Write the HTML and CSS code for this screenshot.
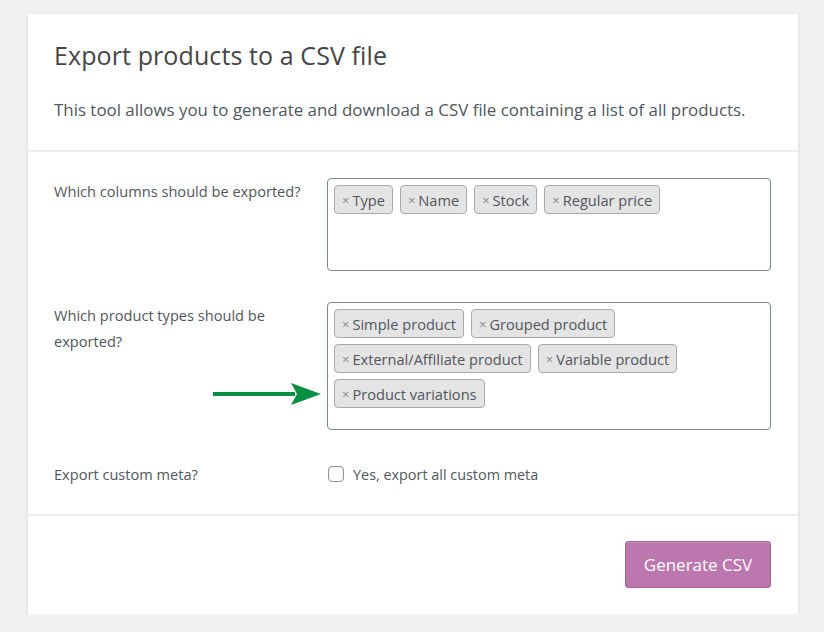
FILE: index.html
```html
<!DOCTYPE html>
<html>
<head>
<meta charset="utf-8">
<link rel="stylesheet" href="styles.css">
</head>
<body>
<div class="card">
  <header class="head">
    <h2 class="title">Export products to a CSV file</h2>
    <p class="desc">This tool allows you to generate and download a CSV file containing a list of all products.</p>
  </header>
  <section class="body">
    <div class="row">
      <div class="label">Which columns should be exported?</div>
      <div class="field">
        <div class="select cols">
          <span class="tag"><span class="x">×</span>Type</span>
          <span class="tag"><span class="x">×</span>Name</span>
          <span class="tag"><span class="x">×</span>Stock</span>
          <span class="tag"><span class="x">×</span>Regular price</span>
        </div>
      </div>
    </div>
    <div class="row">
      <div class="label">Which product types should be exported?</div>
      <div class="field">
        <div class="select types">
          <span class="tag"><span class="x">×</span>Simple product</span>
          <span class="tag"><span class="x">×</span>Grouped product</span>
          <span class="tag"><span class="x">×</span>External/Affiliate product</span>
          <span class="tag"><span class="x">×</span>Variable product</span>
          <span class="tag pointed"><span class="x">×</span>Product variations
            <svg class="arrow" width="110" height="24" viewBox="0 0 110 24"><rect x="0" y="10" width="82" height="4" fill="#0b8f43"/><polygon points="78,1 108,12 78,23 84,12" fill="#0b8f43"/></svg>
          </span>
        </div>
      </div>
    </div>
    <div class="row meta">
      <div class="label">Export custom meta?</div>
      <div class="field">
        <label class="check"><span class="box"></span>Yes, export all custom meta</label>
      </div>
    </div>
  </section>
  <footer class="foot">
    <button class="btn">Generate CSV</button>
  </footer>
</div>
</body>
</html>
```
FILE: styles.css
```css
html, body { margin: 0; padding: 0; }
body {
  background: #f1f1f1;
  font-family: "Open Sans", "Noto Sans", sans-serif;
  color: #50575e;
  padding: 14px 26px 0 28px;
}
.card {
  background: #fff;
  box-shadow: 0 1px 3px rgba(0,0,0,0.13);
  width: 770px;
}
.head {
  padding: 25px 26px 0 26px;
  border-bottom: 2px solid #eeeeee;
  box-sizing: border-box;
  height: 138px;
}
.title {
  margin: 0;
  font-size: 25px;
  font-weight: 400;
  color: #464646;
  line-height: 32px;
  letter-spacing: 0.1px;
}
.desc {
  margin: 27px 0 0 0;
  font-size: 16.9px;
  line-height: 24px;
  color: #50575e;
}
.body {
  padding: 26px 27px 27px 26px;
}
.row {
  display: grid;
  grid-template-columns: 273px 444px;
  margin-bottom: 31px;
}
.row.meta { margin-bottom: 0; margin-top: 8px; }
.label {
  font-size: 14.6px;
  line-height: 26px;
  color: #50575e;
  padding-right: 6px;
}
.select {
  border: 1px solid #7e8993;
  border-radius: 4px;
  box-sizing: border-box;
  padding: 6px 5px 0 6px;
  display: flex;
  flex-wrap: wrap;
  align-content: flex-start;
  gap: 6px 7px;
}
.cols { height: 93px; }
.types { height: 128px; }
.tag {
  position: relative;
  display: inline-flex;
  align-items: center;
  height: 29px;
  box-sizing: border-box;
  padding: 0 7px 0 7px;
  border: 1px solid #aaa;
  border-radius: 4px;
  background: #e4e4e4;
  font-size: 14.6px;
  color: #50575e;
}
.x {
  color: #888;
  font-size: 13px;
  margin-right: 3px;
}
.arrow {
  position: absolute;
  left: -122px;
  top: 2px;
}
.check {
  display: flex;
  align-items: center;
  font-size: 14.4px;
  color: #50575e;
  height: 26px;
}
.box {
  width: 16px;
  height: 16px;
  border: 1px solid #8c8f94;
  border-radius: 4px;
  margin-right: 9px;
  margin-left: 1px;
  box-sizing: border-box;
  background: #fff;
}
.foot {
  border-top: 2px solid #eeeeee;
  padding: 25px 27px 26px 0;
  display: flex;
  justify-content: flex-end;
}
.btn {
  font-family: "Open Sans", "Noto Sans", sans-serif;
  font-size: 17px;
  color: #fff;
  background: #bb77ae;
  border: 1px solid #a36597;
  border-radius: 3px;
  width: 146px;
  height: 47px;
  box-shadow: inset 0 1px 0 rgba(255,255,255,0.2);
}
```
